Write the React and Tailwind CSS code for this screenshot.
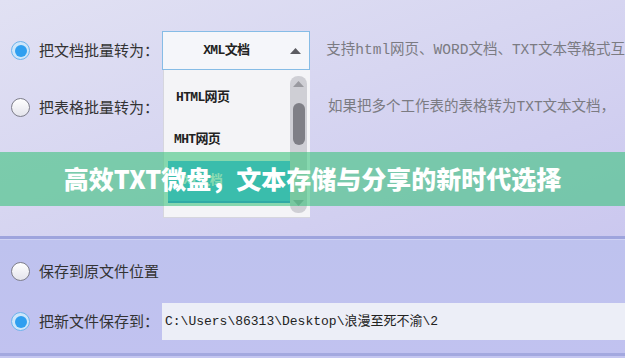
import React from "react";

function Radio({ on }) {
  return on ? (
    <span className="flex h-[19px] w-[19px] shrink-0 items-center justify-center rounded-full border border-[#6db3ec] bg-[#cde6fa]">
      <span className="h-[12px] w-[12px] rounded-full bg-[#2f9ff0]" />
    </span>
  ) : (
    <span className="h-[19px] w-[19px] shrink-0 rounded-full border border-[#7e7e8a] bg-gradient-to-b from-white to-[#e4e4ec]" />
  );
}

function Tri({ down, className }) {
  return (
    <svg width="11" height="6" viewBox="0 0 11 6" className={className}>
      <path d={down ? "M0 0 L11 0 L5.5 6 Z" : "M0 6 L11 6 L5.5 0 Z"} fill="currentColor" />
    </svg>
  );
}

export default function App() {
  return (
    <div className="relative flex h-[358px] w-[625px] flex-col overflow-hidden font-['Noto_Sans_CJK_SC',sans-serif] text-[15px] text-[#333]">
      {/* upper panel */}
      <div className="relative h-[236px] bg-[linear-gradient(160deg,#e1e1f3_0%,#d7d6f1_45%,#cbc8ef_100%)] pt-[31px]">
        <div className="flex h-[39px] items-center pl-[11px]">
          <Radio on />
          <span className="ml-[9px] w-[124px]">把文档批量转为：</span>
          <div className="relative flex h-[39px] w-[149px] items-center justify-center border border-[#86bce6] bg-[#f5f6fa]">
            <span className="-ml-[20px] font-['Liberation_Mono','Noto_Sans_CJK_SC',monospace] text-[13px] font-bold tracking-tighter text-[#222]">
              XML文档
            </span>
            <Tri className="absolute right-[8px] text-[#5c5c62]" />
          </div>
          <span className="ml-[16px] whitespace-nowrap font-['Liberation_Mono','Noto_Sans_CJK_SC',monospace] text-[14.5px] text-[#7b7b82]">
            支持html网页、WORD文档、TXT文本等格式互
          </span>
        </div>

        <div className="mt-[18px] flex h-[39px] items-center pl-[11px]">
          <Radio />
          <span className="ml-[9px] w-[124px]">把表格批量转为：</span>
          <div className="w-[149px]" />
          <span className="ml-[16px] whitespace-nowrap font-['Liberation_Mono','Noto_Sans_CJK_SC',monospace] text-[14.5px] text-[#7b7b82]">
            如果把多个工作表的表格转为TXT文本文档，
          </span>
        </div>
      </div>

      {/* separator */}
      <div className="h-[3px] bg-[#9ea4dd]" />
      <div className="h-px bg-[#cfd2f4]" />

      {/* lower panel */}
      <div className="flex flex-1 flex-col bg-[linear-gradient(180deg,#bec2ee,#c1c2f0)] pt-[13px]">
        <div className="flex h-[37px] items-center pl-[11px]">
          <Radio />
          <span className="ml-[9px]">保存到原文件位置</span>
        </div>
        <div className="mt-[13px] flex h-[37px] items-center pl-[11px]">
          <Radio on />
          <span className="ml-[9px] w-[123px]">把新文件保存到：</span>
          <div className="flex h-[37px] flex-1 items-center bg-[#eceef7] pl-[3px] font-['Liberation_Mono','Noto_Sans_CJK_SC',monospace] text-[13px] text-[#222]">
            C:\Users\86313\Desktop\浪漫至死不渝\2
          </div>
        </div>
        <div className="mt-auto h-[3px] bg-[#a3a8df]" />
        <div className="h-[2px] bg-[#c4c6f0]" />
      </div>

      {/* open dropdown list */}
      <div className="absolute left-[163px] top-[70px] h-[148px] w-[147px] border-b border-l border-[#d6d6de] bg-[#f4f4f7]">
        <div className="flex flex-col pt-[7px] font-['Liberation_Mono','Noto_Sans_CJK_SC',monospace] text-[13px] font-bold tracking-tighter text-[#222]">
          <div className="flex h-[42px] items-center pl-[12px]">HTML网页</div>
          <div className="flex h-[42px] items-center pl-[10px]">MHT网页</div>
          <div className="ml-[4px] mr-[20px] flex h-[42px] items-center border-b-2 border-[#1f86e0] bg-[#39b3f2] pl-[8px] text-white">
            TXT文档
          </div>
        </div>
        <div className="absolute right-[3px] top-[6px] flex h-[137px] w-[17px] flex-col items-center rounded-[8px] bg-[#cfcfd5] text-[#9a9aa0]">
          <Tri className="mt-[5px]" />
          <div className="mt-[16px] h-[42px] w-[12px] rounded-full bg-[#7f7f86]" />
          <Tri down className="mt-auto mb-[7px]" />
        </div>
      </div>

      {/* title band */}
      <div className="absolute left-0 right-0 top-[152px] flex h-[54px] items-center justify-center bg-[rgba(60,195,125,0.6)] text-[25px] font-black text-white">
        高效TXT微盘，文本存储与分享的新时代选择
      </div>
    </div>
  );
}
